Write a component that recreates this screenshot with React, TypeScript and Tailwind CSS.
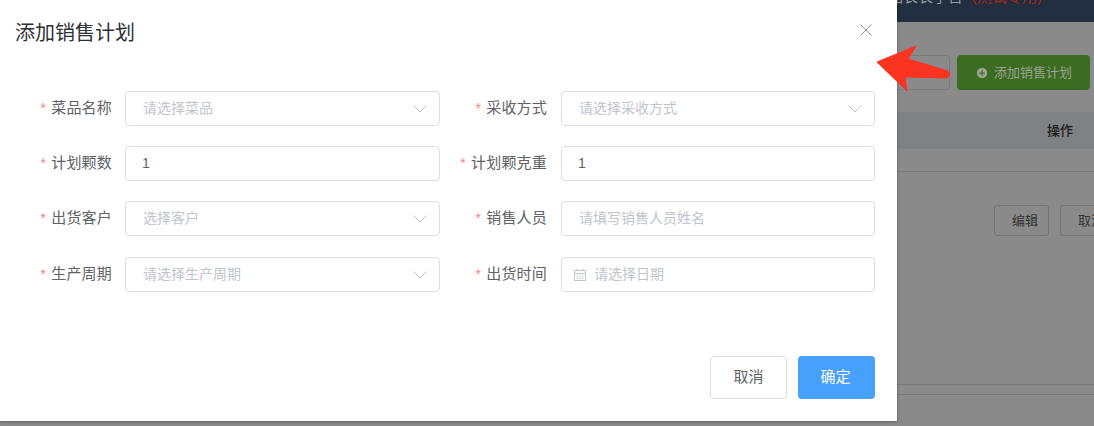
import React from 'react';
import { CirclePlus } from 'lucide-react';

const cjk = 'font-["Liberation_Sans","Noto_Sans_CJK_SC",sans-serif]';

const Chevron = () => (
  <svg width="14" height="8" viewBox="0 0 14 8" fill="none" stroke="#c0c4cc" strokeWidth="1" className="mr-[12px] shrink-0">
    <path d="M0.5 0.5 L7 7 L13.5 0.5" />
  </svg>
);

const CalendarIcon = () => (
  <svg width="14" height="14" viewBox="0 0 14 14" fill="none" stroke="#c0c4cc" strokeWidth="1" className="ml-[11px] shrink-0">
    <path d="M1.5 2.5 H12.5 V12.5 H1.5 Z M1.5 5.5 H12.5 M4 1 V3 M10 1 V3" />
    <path d="M3.5 8 H5 M6.3 8 H7.8 M9 8 H10.5 M3.5 10.3 H5 M6.3 10.3 H7.8 M9 10.3 H10.5" />
  </svg>
);

interface FieldProps {
  label: string;
  placeholder?: string;
  value?: string;
  select?: boolean;
  date?: boolean;
  right?: boolean;
  last?: boolean;
}

const Field = ({ label, placeholder, value, select, date, right, last }: FieldProps) => (
  <div className={`flex items-center h-[35px] ${last ? 'mt-[1px]' : ''}`}>
    <label className={`${right ? 'w-[107px] mr-[14px]' : 'w-[112px] mr-[13px]'} shrink-0 text-right text-[15px] tracking-[0.2px] text-[#606266] whitespace-nowrap`}>
      <span className="text-[#f78989] mr-[5px]">*</span>{label}
    </label>
    <div className="flex-1 h-[35px] border border-[#dcdfe6] rounded-[4px] flex items-center bg-white text-[14px]">
      {date && <CalendarIcon />}
      {value ? (
        <span className="pl-[16px] flex-1 text-[#606266]">{value}</span>
      ) : (
        <span className={`${date ? 'pl-[7px]' : 'pl-[17px]'} flex-1 text-[#c0c4cc]`}>{placeholder}</span>
      )}
      {select && <Chevron />}
    </div>
  </div>
);

export default function App() {
  return (
    <div className={`relative w-[1094px] h-[426px] overflow-hidden bg-[#8a8a8a] ${cjk}`}>
      {/* page behind the dialog */}
      <div className="h-[22px] bg-[#212f40] pl-[888px] overflow-hidden">
        <div className="text-[15px] leading-[20px] -mt-[13px] text-[#989ca1] whitespace-nowrap">
          品长长手台<span className="ml-[9px] text-[#a3261b]">(测试专用)</span>
        </div>
      </div>
      <div className="flex justify-end gap-[7px] pr-[4px] pt-[33px]">
        <div className="w-[60px] h-[35px] border border-[#7b7b7b] rounded-[4px]" />
        <div className="w-[133px] h-[35px] bg-[#3c6b22] rounded-[4px] flex items-center gap-[5px] pl-[18px] text-[13px] text-[#98a391]">
          <CirclePlus size={14} className="fill-[#98a391] text-[#3c6b22]" />
          添加销售计划
        </div>
      </div>
      <div className="mt-[22px] h-[37px] bg-[#7f8184] flex items-center justify-end pr-[21px] text-[13px] font-medium text-[#1c1c1c]">操作</div>
      <div className="mt-[22px] border-t border-[#7a7a7a] flex gap-[11px] pt-[33px] pl-[994px]">
        <div className="w-[55px] shrink-0 h-[31px] border border-[#757575] rounded-[3px] flex items-center pl-[17px] text-[13px] text-[#333]">编辑</div>
        <div className="w-[55px] shrink-0 h-[31px] border border-[#757575] rounded-[3px] flex items-center pl-[17px] text-[13px] text-[#333] whitespace-nowrap">取消</div>
      </div>
      <div className="absolute left-0 right-0 top-[384px] h-[11px] border-y border-[#7a7a7a]" />

      {/* dialog */}
      <div className="absolute left-0 top-0 w-[897px] h-[421px] bg-white shadow-[0_1px_3px_rgba(0,0,0,0.3)] flex flex-col">
        <div className="flex items-start justify-between h-[66px] pl-[15px] pr-[25px]">
          <span className="mt-[19px] text-[20px] leading-[28px] text-[#303133]">添加销售计划</span>
          <svg width="12" height="12" viewBox="0 0 12 12" stroke="#909399" strokeWidth="1" className="mt-[24px]">
            <path d="M0.5 0.5 L11.5 11.5 M11.5 0.5 L0.5 11.5" />
          </svg>
        </div>
        <div className="grid grid-cols-[440px_435px] gap-y-[20px] pt-[25px]">
          <Field label="菜品名称" placeholder="请选择菜品" select />
          <Field right label="采收方式" placeholder="请选择采收方式" select />
          <Field label="计划颗数" value="1" />
          <Field right label="计划颗克重" value="1" />
          <Field label="出货客户" placeholder="选择客户" select />
          <Field right label="销售人员" placeholder="请填写销售人员姓名" />
          <Field last label="生产周期" placeholder="请选择生产周期" select />
          <Field last right label="出货时间" placeholder="请选择日期" date />
        </div>
        <div className="mt-auto mb-[22px] flex justify-end gap-[11px] pr-[22px]">
          <button className="w-[77px] h-[43px] border border-[#dcdfe6] rounded-[4px] bg-white text-[15px] text-[#606266]">取消</button>
          <button className="w-[77px] h-[43px] pr-[2px] rounded-[4px] bg-[#46a0fc] text-[15px] text-white">确定</button>
        </div>
      </div>

      {/* annotation arrow */}
      <svg className="absolute left-[876px] top-[44px]" width="76" height="50" viewBox="0 0 76 50">
        <path d="M1 18 L40 2 L32 15 L72 27 Q76 31 71 34 L29 33 L31 47 Z" fill="#fb3320" stroke="#fb3320" strokeLinejoin="round" />
      </svg>
    </div>
  );
}
